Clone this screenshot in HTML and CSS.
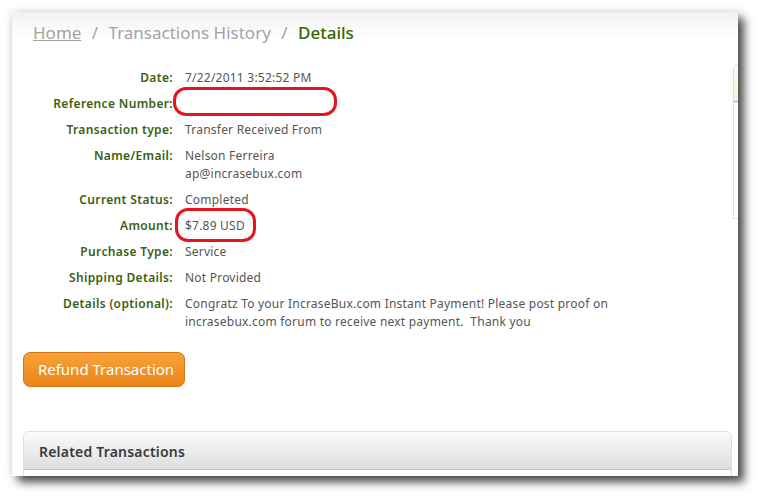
FILE: index.html
```html
<!DOCTYPE html>
<html>
<head>
<meta charset="utf-8">
<link rel="stylesheet" href="styles.css">
</head>
<body>
<div class="window">
  <div class="main">
    <div class="crumbs">
      <a class="crumb-link" href="#">Home</a>
      <span class="sep">/</span>
      <span class="crumb">Transactions History</span>
      <span class="sep">/</span>
      <span class="crumb-current">Details</span>
    </div>
    <div class="details">
      <div class="label">Date:</div><div class="value">7/22/2011 3:52:52 PM</div>
      <div class="label">Reference Number:</div><div class="value">&nbsp;</div>
      <div class="label">Transaction type:</div><div class="value">Transfer Received From</div>
      <div class="label">Name/Email:</div><div class="value">Nelson Ferreira<br>ap@incrasebux.com</div>
      <div class="label">Current Status:</div><div class="value">Completed</div>
      <div class="label">Amount:</div><div class="value">$7.89 USD</div>
      <div class="label">Purchase Type:</div><div class="value">Service</div>
      <div class="label">Shipping Details:</div><div class="value">Not Provided</div>
      <div class="label">Details (optional):</div><div class="value">Congratz To your IncraseBux.com Instant Payment! Please post proof on<br>incrasebux.com forum to receive next payment.&nbsp; Thank you</div>
    </div>
    <button class="refund">Refund Transaction</button>
    <div class="related">
      <div class="related-head">Related Transactions</div>
      <div class="related-body"></div>
    </div>
  </div>
  <div class="sidebar">
    <div class="sidebar-head"></div>
  </div>
  <div class="mark mark-ref"></div>
  <div class="mark mark-amount"></div>
</div>
</body>
</html>
```

FILE: styles.css
```css
html, body {
  margin: 0;
  padding: 0;
  background: #ffffff;
}
body {
  width: 758px;
  height: 496px;
  overflow: hidden;
  font-family: "Noto Sans", "DejaVu Sans", sans-serif;
}
.window {
  position: relative;
  margin: 12px 0 0 12px;
  width: 726px;
  height: 464px;
  background: linear-gradient(#f1f1f1, #ffffff 26px);
  box-shadow: 6px 6px 9px rgba(0,0,0,0.7), 0 0 10px rgba(0,0,0,0.12);
  overflow: hidden;
  display: flex;
  align-items: flex-start;
}
.main {
  flex: none;
  width: 709px;
  padding-left: 11px;
}
.crumbs {
  padding: 8px 0 0 10px;
  font-size: 17px;
  line-height: 26px;
  color: #a3a3a3;
  white-space: nowrap;
}
.crumb-link {
  color: #a3a3a3;
  text-decoration: underline;
}
.sep {
  margin: 0 6px;
}
.crumb-current {
  color: #336600;
  font-weight: 500;
}
.details {
  display: grid;
  grid-template-columns: 150px 1fr;
  column-gap: 12px;
  row-gap: 8px;
  margin-top: 23px;
  font-size: 12px;
  line-height: 18px;
}
.label {
  text-align: right;
  color: #3b6110;
  font-weight: 600;
  letter-spacing: 0.35px;
  white-space: nowrap;
}
.value {
  color: #555555;
  letter-spacing: 0.22px;
  white-space: nowrap;
}
.refund {
  display: block;
  margin-top: 21px;
  width: 162px;
  height: 35px;
  padding: 0 0 0 4px;
  border: 1px solid #cf7414;
  border-radius: 7px;
  background: linear-gradient(#f7a23a, #ec8419);
  color: #ffffff;
  font-family: "Noto Sans", "DejaVu Sans", sans-serif;
  font-size: 15px;
  line-height: 33px;
  text-align: center;
}
.related {
  margin-top: 44px;
  border: 1px solid #dddddd;
  border-radius: 6px 6px 0 0;
  overflow: hidden;
}
.related-head {
  height: 37px;
  padding-left: 15px;
  line-height: 40px;
  font-size: 14px;
  font-weight: 600;
  letter-spacing: 0.2px;
  color: #3a3a3a;
  background: linear-gradient(#fbfbfb, #dedede);
  border-bottom: 1px solid #c4c4c4;
}
.related-body {
  height: 40px;
  background: #ffffff;
}
.sidebar {
  flex: none;
  width: 120px;
  height: 153px;
  margin: 52px 0 0 1px;
  border: 1px solid #dddddd;
  border-radius: 6px 0 0 0;
  background: #ffffff;
}
.sidebar-head {
  height: 36px;
  background: linear-gradient(#fafff2, #eaf9d8);
  border-bottom: 1px solid #a8a8a8;
  border-radius: 6px 0 0 0;
}
.mark {
  position: absolute;
  border: 3px solid #e3151f;
  border-radius: 13px;
}
.mark-ref {
  left: 161px;
  top: 75px;
  width: 158px;
  height: 23px;
}
.mark-amount {
  left: 163px;
  top: 196px;
  width: 75px;
  height: 28px;
}
```
